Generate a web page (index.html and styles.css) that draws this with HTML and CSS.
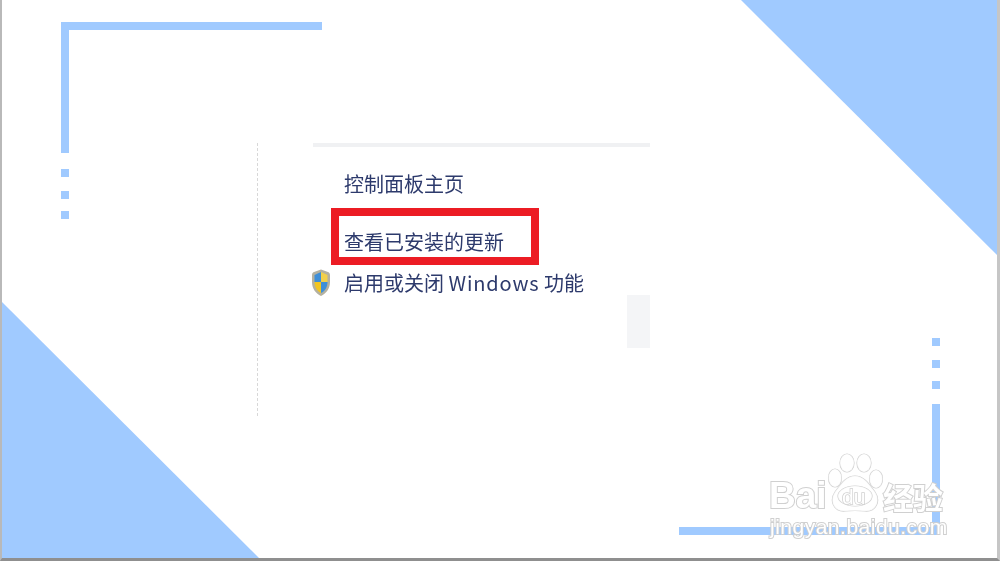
FILE: index.html
```html
<!DOCTYPE html>
<html lang="zh-CN">
<head>
<meta charset="utf-8">
<title>查看已安装的更新</title>
<link rel="stylesheet" href="styles.css">
</head>
<body>
<main class="slide">
  <svg class="decor" viewBox="0 0 1000 561" width="1000" height="561" aria-hidden="true">
    <polygon class="blue" points="741,0 998,0 998,256"/>
    <polygon class="blue" points="2,302 260,559 2,559"/>
    <g class="blue">
      <rect x="61" y="22" width="261" height="8"/>
      <rect x="61" y="22" width="8" height="131"/>
      <rect x="61" y="169" width="8" height="8"/>
      <rect x="61" y="191" width="8" height="8"/>
      <rect x="61" y="211" width="8" height="8"/>
      <rect x="679" y="527" width="261" height="8"/>
      <rect x="932" y="404" width="8" height="131"/>
      <rect x="932" y="338" width="8" height="8"/>
      <rect x="932" y="360" width="8" height="8"/>
      <rect x="932" y="381" width="8" height="8"/>
    </g>
  </svg>

  <section class="panel">
    <div class="panel-rule"></div>
    <ul class="links">
      <li class="link">控制面板主页</li>
      <li class="link link-marked">查看已安装的更新</li>
      <li class="link link-icon">
        <svg class="shield" viewBox="0 0 18 27" width="18" height="27" aria-hidden="true">
          <path d="M9 .5 L16 3 C17.5 3.5 18 4.5 18 6.5 V13 C18 20 14 24.5 9 27 C4 24.5 0 20 0 13 V6.5 C0 4.500 .5 3.500 2 3 Z" fill="#b4b1a0"/>
          <path d="M9 3 V13 H2.500 V6 Z" fill="#3f8fd8"/>
          <path d="M9 3 L15.500 6 V13 H9 Z" fill="#f2d04a"/>
          <path d="M2.500 13 H9 V24 C5 22 2.500 18 2.500 13 Z" fill="#f2c521"/>
          <path d="M9 13 H15.500 C15.500 18 13 22 9 24 Z" fill="#3f8fd8"/>
        </svg>
        启用或关闭 <span class="latin">Windows</span> 功能
      </li>
    </ul>
    <div class="panel-block"></div>
  </section>

  <div class="highlight"></div>

  <div class="watermark">
    <svg class="paw" viewBox="0 0 56 60" width="56" height="60" aria-hidden="true">
      <g fill="#fff" fill-opacity=".8" stroke="#d0d0d0" stroke-width="1.200">
        <ellipse cx="8" cy="25" rx="6.500" ry="9"/>
        <ellipse cx="20" cy="10" rx="7" ry="9"/>
        <ellipse cx="37" cy="10" rx="7" ry="9"/>
        <ellipse cx="49" cy="26" rx="6.500" ry="9"/>
        <path d="M28 23 C37 23 42 31 48 39 C54 48 49 59 38 58 C33 57.500 23 57.500 18 58 C7 59 2 48 8 39 C14 31 19 23 28 23 Z"/>
        <ellipse cx="28" cy="43" rx="17" ry="10"/>
      </g>
    </svg>
    <span class="wm-bai">Bai</span>
    <span class="wm-du">du</span>
    <span class="wm-cn">经验</span>
    <span class="wm-url">jingyan.baidu.com</span>
  </div>
</main>
</body>
</html>
```
FILE: styles.css
```css
html, body {
  margin: 0;
  padding: 0;
  background: #fff;
  overflow: hidden;
}
.slide {
  position: relative;
  box-sizing: border-box;
  width: 1000px;
  height: 561px;
  background: #fff;
  overflow: hidden;
  font-family: "Noto Sans CJK SC", "Noto Sans", sans-serif;
}
.slide::after {
  content: "";
  position: absolute;
  inset: 0;
  border-left: 2px solid #b9b9b9;
  border-right: 3px solid #c6c6c6;
  border-bottom: 3px solid #8f8f8f;
  pointer-events: none;
}
.decor {
  position: absolute;
  left: 0;
  top: 0;
}
.blue {
  fill: #a0caff;
}
.panel {
  position: absolute;
  left: 257px;
  top: 143px;
  box-sizing: border-box;
  width: 393px;
  height: 273px;
  border-left: 1px dashed #d8d8d8;
  padding-left: 55px;
  display: flex;
  flex-direction: column;
}
.panel-rule {
  height: 4px;
  background: #f0f1f3;
}
.links {
  list-style: none;
  margin: 0;
  padding: 21px 0 0 31px;
  color: #2d3a6c;
  font-size: 20px;
  line-height: 32px;
  filter: blur(0.5px);
}
.link {
  margin-bottom: 26px;
  white-space: nowrap;
}
.link-marked {
  margin-bottom: 9px;
}
.link-icon {
  position: relative;
  margin-bottom: 0;
}
.latin {
  letter-spacing: 0.85px;
}
.shield {
  position: absolute;
  left: -32px;
  top: 2px;
}
.panel-block {
  position: absolute;
  right: 0;
  top: 152px;
  width: 23px;
  height: 53px;
  background: #f4f5f7;
}
.highlight {
  position: absolute;
  left: 331px;
  top: 208px;
  width: 208px;
  height: 57px;
  box-sizing: border-box;
  border: 8px solid #ec1c24;
}
.watermark {
  position: absolute;
  left: 765px;
  top: 452px;
  width: 190px;
  height: 90px;
  color: #fff;
  font-family: "Liberation Sans", sans-serif;
  font-weight: 700;
  -webkit-text-stroke: 2px #d0d0d0;
  paint-order: stroke fill;
  filter: blur(0.4px);
}
.paw {
  position: absolute;
  left: 62px;
  top: 1px;
}
.wm-bai {
  position: absolute;
  left: 4px;
  top: 21px;
  font-size: 37px;
  line-height: 46px;
}
.wm-du {
  position: absolute;
  left: 77px;
  top: 33px;
  font-size: 21px;
  font-weight: 400;
  line-height: 24px;
  -webkit-text-stroke-width: 1.500px;
}
.wm-cn {
  position: absolute;
  left: 118px;
  top: 24px;
  font-size: 30px;
  line-height: 40px;
  font-family: "Noto Sans CJK SC", sans-serif;
}
.wm-url {
  position: absolute;
  left: 5px;
  top: 62px;
  font-size: 21px;
  font-weight: 400;
  line-height: 26px;
  letter-spacing: 0.5px;
}
```
